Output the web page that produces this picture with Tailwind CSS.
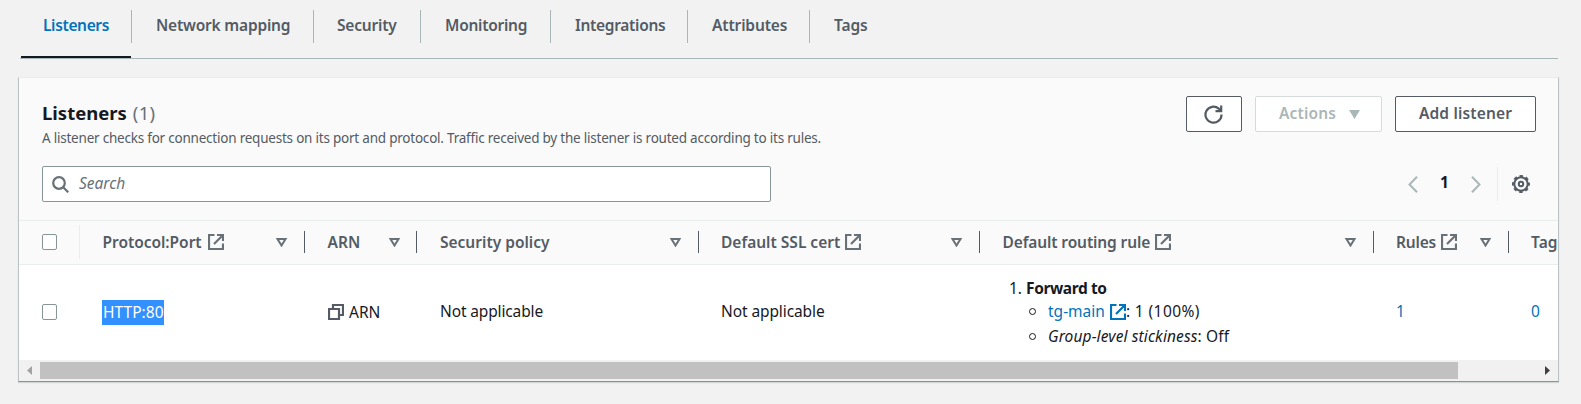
<!DOCTYPE html>
<html lang="en">
<head>
<meta charset="utf-8">
<title>Listeners</title>
<script src="https://cdn.jsdelivr.net/npm/@tailwindcss/browser@4"></script>
</head>
<body class="h-[404px] overflow-hidden bg-[#f2f2f2] font-['Noto_Sans',sans-serif] text-[15.5px] leading-[25px] text-[#16191f] whitespace-nowrap">
<svg class="hidden">
  <symbol id="ext" viewBox="0 0 16 16"><path d="M6.500 1H1v14h14V9.500M9 1h6v6M15 1L6 10" fill="none" stroke="currentColor" stroke-width="2.200"/></symbol>
  <symbol id="tri" viewBox="0 0 11 9"><path d="M1.500 1h8L5.500 7.500z" fill="none" stroke="currentColor" stroke-width="2"/></symbol>
</svg>

<nav class="mr-[23px] ml-5 flex h-[59px] border-b border-[#aab7b8] pt-[10px] pl-px font-semibold text-[#545b64]">
  <div class="relative flex h-[33px] w-[111px] items-center border-r border-[#aab7b8] pb-[2px] pl-[22px] text-[#0073bb]"><span class="tracking-[-0.35px]">Listeners</span><i class="absolute top-[46px] left-0 h-[2px] w-[110px] bg-[#16191f]"></i></div>
  <div class="flex h-[33px] w-[182px] items-center border-r border-[#aab7b8] pb-[2px] pl-6 tracking-[-0.2px]">Network mapping</div>
  <div class="flex h-[33px] w-[107px] items-center border-r border-[#aab7b8] pb-[2px] pl-[23px] tracking-[-0.2px]">Security</div>
  <div class="flex h-[33px] w-[130px] items-center border-r border-[#aab7b8] pb-[2px] pl-6 tracking-[-0.27px]">Monitoring</div>
  <div class="flex h-[33px] w-[137px] items-center border-r border-[#aab7b8] pb-[2px] pl-6 tracking-[-0.3px]">Integrations</div>
  <div class="flex h-[33px] w-[122px] items-center border-r border-[#aab7b8] pb-[2px] pl-6 tracking-[-0.15px]">Attributes</div>
  <div class="flex h-[33px] items-center pb-[2px] pl-6 tracking-[-0.1px]">Tags</div>
</nav>

<main class="ml-[18px] mt-[18px] h-[305px] w-[1541px] overflow-hidden border border-t-[#eaeded] border-r-[#bcc3c4] border-b-[#879596] border-l-[#bcc3c4] bg-white shadow-[0_1px_1px_#d0d5d5]">
  <header class="h-[142px] bg-[#fafafa] px-[22px] pt-[18px] pl-[23px]">
    <div class="flex justify-between">
      <div class="pt-[4px]">
        <h2 class="text-[18.5px] leading-[25px]"><span class="font-bold">Listeners</span> <span class="ml-px text-[#687078] tracking-[0.4px]">(1)</span></h2>
        <p class="relative top-px text-[13.5px] leading-[25px] tracking-[-0.22px] text-[#545b64]">A listener checks for connection requests on its port and protocol. Traffic received by the listener is routed according to its rules.</p>
      </div>
      <div class="flex gap-[13px] font-semibold text-[#545b64]">
        <button class="grid h-9 w-14 place-items-center rounded-[2px] border border-[#545b64] bg-white"><svg class="mr-px size-[19px]" viewBox="0 0 19 19" fill="none" stroke="currentColor" stroke-width="2.200"><path d="M17.500 9.500A8 8 0 1 1 14.700 3.600L17 6M17.200 .500V6.200H11.500"/></svg></button>
        <button class="flex h-9 w-[127px] items-center gap-[13px] rounded-[2px] border border-[#d5dbdb] bg-white pl-[23px] text-[#aab7b8]"><span class="pb-px tracking-[0.15px]">Actions</span><svg class="h-[9px] w-[11px]" viewBox="0 0 11 9" fill="currentColor"><path d="M0 0h11L5.500 9z"/></svg></button>
        <button class="h-9 w-[141px] rounded-[2px] border border-[#545b64] bg-white pb-px tracking-[0.15px]">Add listener</button>
      </div>
    </div>
    <div class="mt-[16px] flex h-9 items-center justify-between">
      <div class="flex h-9 w-[729px] items-center rounded-[2px] border border-[#879596] bg-white pl-[9px] text-[#687078] italic"><svg class="mr-[10px] size-[17px]" viewBox="0 0 17 17" fill="none" stroke="currentColor" stroke-width="2.200"><circle cx="7" cy="7" r="5.800"/><path d="M11 11l5.300 5.300"/></svg><span class="pb-[1px]">Search</span></div>
      <div class="flex items-center pr-[6px] text-[#aab7b8]">
        <svg class="h-[17px] w-[10px]" viewBox="0 0 10 17" fill="none" stroke="currentColor" stroke-width="2"><path d="M9 .700L1.500 8.500 9 16.300"/></svg>
        <span class="w-[53px] pb-[3px] text-center text-[15.5px] font-bold text-[#16191f]">1</span>
        <svg class="h-[17px] w-[10px]" viewBox="0 0 10 17" fill="none" stroke="currentColor" stroke-width="2"><path d="M1 .700L8.500 8.500 1 16.300"/></svg>
        <i class="ml-[16px] h-[34px] w-px bg-[#eaeded]"></i>
        <svg class="ml-[14px] size-[18px] text-[#545b64]" viewBox="0 0 18 18" fill="none" stroke="currentColor"><circle cx="9" cy="9" r="6.700" stroke-width="2"/><circle cx="9" cy="9" r="8" stroke-width="2" stroke-dasharray="3.400 2.883" stroke-dashoffset="1.700"/><circle cx="9" cy="9" r="2.200" stroke-width="2"/></svg>
      </div>
    </div>
  </header>

  <div class="w-[1640px]">
    <div class="flex h-[45px] items-center border-y border-[#eaeded] bg-[#fafafa] pb-px pl-px font-semibold text-[#545b64]">
      <div class="flex h-[34px] w-[60px] items-center border-r border-[#eaeded] pl-[22px]"><i class="h-4 w-[15px] rounded-[2px] border border-[#879596] bg-white"></i></div>
      <div class="flex h-[22px] w-[225px] items-center border-r border-[#545b64] pr-[17px] pl-[22.5px]"><span class="tracking-[-0.03px]">Protocol:Port</span><svg class="ml-[6px] size-4 text-[#687078]"><use href="#ext"/></svg><svg class="ml-auto h-[9px] w-[11px] text-[#687078]"><use href="#tri"/></svg></div>
      <div class="flex h-[22px] w-[112px] items-center border-r border-[#545b64] pr-[16px] pl-[22.5px]"><span>ARN</span><svg class="ml-auto h-[9px] w-[11px] text-[#687078]"><use href="#tri"/></svg></div>
      <div class="flex h-[22px] w-[282px] items-center border-r border-[#545b64] pr-[17px] pl-[23px]"><span>Security policy</span><svg class="ml-auto h-[9px] w-[11px] text-[#687078]"><use href="#tri"/></svg></div>
      <div class="flex h-[22px] w-[281px] items-center border-r border-[#545b64] pr-[17px] pl-[22px]"><span>Default SSL cert</span><svg class="ml-[5px] size-4 text-[#687078]"><use href="#ext"/></svg><svg class="ml-auto h-[9px] w-[11px] text-[#687078]"><use href="#tri"/></svg></div>
      <div class="flex h-[22px] w-[394px] items-center border-r border-[#545b64] pr-[17px] pl-[22.5px]"><span class="tracking-[-0.12px]">Default routing rule</span><svg class="ml-[5px] size-4 text-[#687078]"><use href="#ext"/></svg><svg class="ml-auto h-[9px] w-[11px] text-[#687078]"><use href="#tri"/></svg></div>
      <div class="flex h-[22px] w-[135px] items-center border-r border-[#545b64] pr-[17px] pl-[22px]"><span class="tracking-[-0.2px]">Rules</span><svg class="ml-[5px] size-4 text-[#687078]"><use href="#ext"/></svg><svg class="ml-auto h-[9px] w-[11px] text-[#687078]"><use href="#tri"/></svg></div>
      <div class="pl-[22px] tracking-[0.1px]">Tags</div>
    </div>
    <div class="flex h-[95px] items-center pb-[1px] pl-px">
      <div class="w-[60px] pl-[22px]"><i class="block h-4 w-[15px] rounded-[2px] border border-[#879596] bg-white"></i></div>
      <div class="w-[225px] pl-[22px]"><span class="block h-[25px] w-[62px] bg-[#3390ff] pl-px leading-[24px] tracking-[0.05px] text-white">HTTP:80</span></div>
      <div class="flex w-[112px] items-center pl-[23px]"><svg class="mr-[5px] size-4 text-[#545b64]" viewBox="0 0 16 16" fill="none" stroke="currentColor" stroke-width="2.200"><path d="M1 5h10v10H1zM5 5V1h10v10h-4"/></svg>ARN</div>
      <div class="w-[282px] pb-px pl-[23px] tracking-[-0.14px]">Not applicable</div>
      <div class="w-[281px] pb-px pl-[22px] tracking-[-0.1px]">Not applicable</div>
      <div class="w-[394px] pl-[29px]">
        <div class="h-6 pt-px leading-6">1. <b class="font-bold tracking-[-0.4px]">Forward to</b></div>
        <div class="flex items-center pl-[20px]"><i class="mr-[12px] size-[7px] rounded-full border border-[#16191f]"></i><span class="text-[#0073bb]">tg-main</span><svg class="ml-[5px] size-4 text-[#0073bb]"><use href="#ext"/></svg><span class="tracking-[0.4px]">: 1 (100%)</span></div>
        <div class="flex items-center pl-[20px]"><i class="mr-[12px] size-[7px] rounded-full border border-[#16191f]"></i><span class="tracking-[0.12px]"><em>Group-level stickiness</em>: Off</span></div>
      </div>
      <div class="w-[135px] pb-px pl-[22px] text-[#0073bb]">1</div>
      <div class="pb-px pl-[22px] text-[#0073bb]">0</div>
    </div>
  </div>
  <div class="flex h-[21px] items-center bg-[#f1f1f1] px-[7px]">
    <svg class="ml-px h-[9px] w-[5px]" viewBox="0 0 5 9"><path d="M5 0v9L0 4.500z" fill="#a3a3a3"/></svg>
    <i class="ml-2 h-[17px] w-[1418px] bg-[#c1c1c1]"></i>
    <svg class="mr-px ml-auto h-[9px] w-[5px]" viewBox="0 0 5 9"><path d="M0 0v9l5-4.500z" fill="#404040"/></svg>
  </div>
</main>
</body>
</html>
